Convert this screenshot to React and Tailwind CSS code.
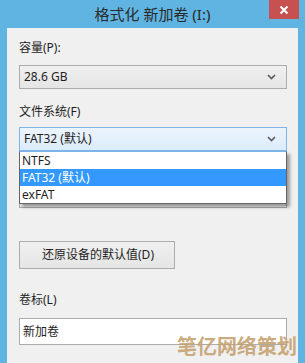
import { useState } from "react";

const font = { fontFamily: '"Noto Sans", "Noto Sans CJK SC", sans-serif' };

const Chevron = ({ color = "#5a5a5a" }) => (
  <svg width="9" height="6" viewBox="0 0 9 6" className="shrink-0">
    <path d="M1 1 L4.5 4.5 L8 1" fill="none" stroke={color} strokeWidth="1.6" />
  </svg>
);

const Select = ({ value, active }) => (
  <div
    className={`flex h-[24px] items-center justify-between border pl-[4px] pr-[10px] text-[12px] text-[#1e1e1e] ${
      active
        ? "border-[#7eb4ea] bg-gradient-to-b from-[#ecf4fc] to-[#dcecfc]"
        : "border-[#acacac] bg-gradient-to-b from-[#f0f0f0] to-[#e5e5e5]"
    }`}
  >
    <span>{value}</span>
    <Chevron />
  </div>
);

export default function App() {
  const options = ["NTFS", "FAT32 (默认)", "exFAT"];
  const [selected] = useState(1);

  return (
    <div className="flex h-[363px] w-[305px] flex-col overflow-hidden bg-[#5fb4e1]" style={font}>
      {/* title bar */}
      <div className="flex h-[28px] shrink-0 items-start">
        <div className="flex h-[28px] flex-1 items-center justify-center pl-[36px] text-[15px] text-[#2a2a2a]">
          格式化 新加卷 (I:)
        </div>
        <div className="mr-[6px] flex h-[19px] w-[30px] items-center justify-center bg-[#c75050] text-white">
          <svg width="10" height="10" viewBox="0 0 10 10">
            <path d="M1.5 1.5 L8.5 8.5 M8.5 1.5 L1.5 8.5" stroke="white" strokeWidth="2" />
          </svg>
        </div>
      </div>

      {/* body */}
      <div className="relative ml-[7px] mr-[7px] flex flex-1 flex-col bg-[#f0f0f0] pl-[12px] pr-[11px] pt-[12px] text-[12px] text-[#1e1e1e]">
        <div className="h-[16px] leading-[16px]">容量(P):</div>
        <div className="mt-[9px]">
          <Select value="28.6 GB" />
        </div>

        <div className="mt-[15px] h-[16px] leading-[16px]">文件系统(F)</div>
        <div className="relative mt-[7px]">
          <Select value="FAT32 (默认)" active />
          {/* open dropdown list */}
          <div className="absolute left-0 right-0 top-[24px] z-10 border border-[#646464] border-t-[#7eb4ea] bg-white shadow-[3px_3px_3px_rgba(0,0,0,0.35)]">
            {options.map((o, i) => (
              <div
                key={o}
                className={`h-[17px] pl-[2px] text-[12px] leading-[17px] ${
                  i === selected ? "bg-[#3399ff] text-white" : "text-[#1e1e1e]"
                }`}
              >
                {o}
              </div>
            ))}
          </div>
        </div>

        {/* covered by the open list */}
        <div className="mt-[14px] h-[16px]" />
        <div className="mt-[3px] h-[24px] border border-[#acacac] bg-[#ebebeb]" />

        <button className="mt-[33px] flex h-[28px] w-[156px] items-center justify-center border border-[#acacac] bg-gradient-to-b from-[#f0f0f0] to-[#e5e5e5] pl-[2px] text-[12px] text-[#1e1e1e]">
          还原设备的默认值(D)
        </button>

        <div className="mt-[23px] h-[16px] leading-[16px]">卷标(L)</div>
        <div className="mt-[10px] flex h-[27px] items-center border border-[#acacac] bg-white pl-[3px] text-[12px]">
          新加卷
        </div>

        {/* watermark */}
        <div
          className="absolute bottom-[6px] right-[1px] z-20 text-[20px] font-bold leading-[22px] text-[#c4a06e]/90"
          style={{ fontFamily: '"Noto Sans CJK SC", sans-serif' }}
        >
          笔亿网络策划
        </div>
      </div>
    </div>
  );
}
